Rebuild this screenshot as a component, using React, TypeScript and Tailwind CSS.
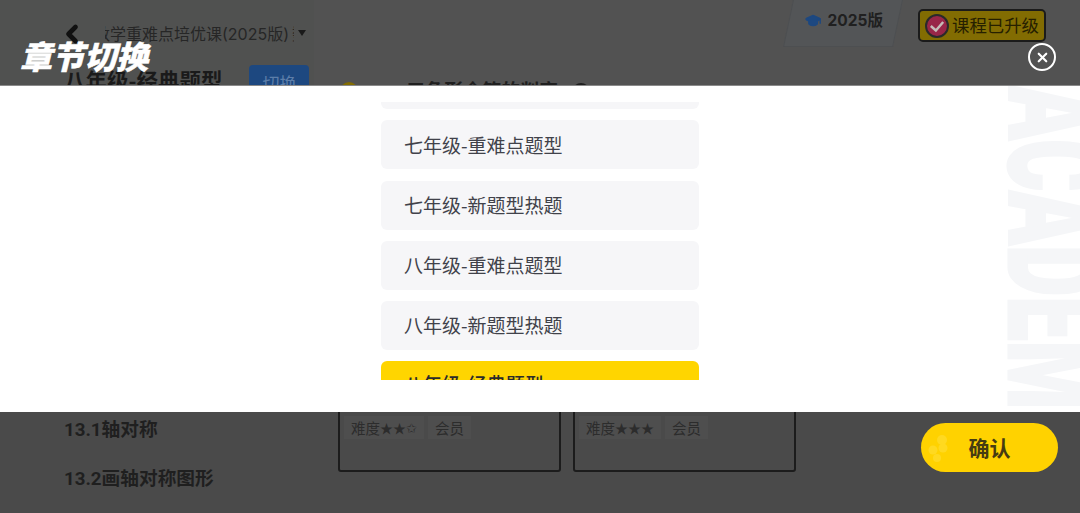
import { ChevronLeft, GraduationCap, X } from 'lucide-react';

const CJK = "font-['Noto_Sans_CJK_SC','Noto_Sans',sans-serif]";
const LATIN = "font-['Inter','Noto_Sans_CJK_SC',sans-serif]";
const HEADING = "font-['Roboto','Noto_Sans_CJK_SC',sans-serif]";

const chapters = ['七年级-重难点题型', '七年级-新题型热题', '八年级-重难点题型', '八年级-新题型热题'];

const Tag = ({ children }: { children: React.ReactNode }) => (
  <span className="flex h-[23px] items-center bg-[#4e4e4e] px-[7px] text-[14.5px] text-[#2c2c2c]">{children}</span>
);

const Card = ({ level }: { level: string }) => (
  <div className="flex h-[88px] w-[223px] items-start gap-[4px] rounded-[3px] border-2 border-[#1c1c1c] pl-[4px] pt-[30px]">
    <Tag>
      难度<span className="text-[13px] leading-none">{level}</span>
    </Tag>
    <Tag>会员</Tag>
  </div>
);

export default function App() {
  return (
    <div className={`relative h-[513px] w-[1080px] overflow-hidden bg-[#4a4a4a] ${CJK}`}>
      {/* page under the dimmed layer */}
      <div className="flex h-full">
        <aside className="flex h-full w-[314px] flex-col">
          <div className="h-[85px] overflow-hidden bg-[#505150] pl-[64px]">
            <div className="flex h-[65px] items-start pt-[20px]">
              <ChevronLeft className="-ml-[6px] h-[28px] w-[28px] text-[#111111]" strokeWidth={4} />
              <div className="ml-[19px] w-[189px] overflow-hidden pt-[1px]">
                <div className={`-ml-[11px] whitespace-nowrap text-[16px] leading-[26px] text-[#262626] ${LATIN}`}>
                  数学重难点培优课(2025版)<span className="ml-[3px]">数学</span>
                </div>
              </div>
              <span className="ml-[4px] mt-[10px] h-0 w-0 border-x-[4px] border-t-[6px] border-x-transparent border-t-[#1a1a1a]" />
            </div>
            <div className="flex items-start">
              <span className="whitespace-nowrap text-[21.5px] font-bold leading-[30px] text-[#1a1a1a]">八年级-经典题型</span>
              <span className="ml-[27px] flex h-[36px] w-[60px] items-center justify-center rounded-[4px] bg-[#1d4880] text-[17px] text-[#5d7ea9]">
                切换
              </span>
            </div>
          </div>
          <div className={`mt-[332px] flex flex-col gap-[23px] pl-[64px] text-[18.7px] font-bold leading-[26px] text-[#1f1f1f] ${HEADING}`}>
            <span>13.1轴对称</span>
            <span>13.2画轴对称图形</span>
          </div>
        </aside>

        <main className="flex h-full flex-1 flex-col">
          <div className="h-[85px] overflow-hidden bg-[#525252]">
            <div className="flex h-[47px] items-start justify-end pr-[34px]">
              <div className="mr-[20px] flex h-[47px] w-[110px] -skew-x-[12deg] items-center justify-center border border-t-0 border-[#4d4f51] bg-[#535557] pb-[5px]">
                <div className={`ml-[1px] flex skew-x-[12deg] items-center gap-[6px] ${LATIN}`}>
                  <GraduationCap className="h-[17px] w-[17px] fill-[#1d4880] text-[#1d4880]" />
                  <span className="text-[15.5px] font-bold text-[#202020]">2025版</span>
                </div>
              </div>
              <div className="mt-[9px] flex h-[33px] w-[128px] items-center gap-[3px] rounded-[5px] border-2 border-[#1b1b1b] bg-[#826c02] pl-[5px]">
                <span className="flex h-[24px] w-[24px] shrink-0 items-center justify-center rounded-full border-2 border-[#2a2a2a] bg-[#982648]">
                  <svg viewBox="0 0 16 16" className="h-[18px] w-[18px]">
                    <path d="M2.5 8 7 12 13.5 4.5" fill="none" stroke="#c4bdb9" strokeWidth="2.2" />
                  </svg>
                </span>
                <span className="whitespace-nowrap text-[17.4px] text-[#262000]">课程已升级</span>
              </div>
            </div>
            <div className="ml-[26px] mt-[32px] flex items-center text-[19px] font-bold leading-[26px] text-[#1f1f1f]">
              <span className="-mt-[2px] h-[18px] w-[18px] rounded-full bg-[#826c02]" />
              <span className={`ml-[10px] whitespace-nowrap ${HEADING}`}>13.3三角形全等的判定</span>
              <span className="ml-[14px] h-[18px] w-[18px] rounded-full border-2 border-[#1f1f1f]" />
            </div>
          </div>
          <div className="flex flex-1 gap-[12px] pl-[24px] pt-[299px]">
            <Card level="★★✩" />
            <Card level="★★★" />
          </div>
        </main>
      </div>

      {/* chapter switch sheet */}
      <div className="absolute inset-x-0 top-0 h-[85px]">
        <h2 className="absolute left-[20px] top-[33px] text-[32px] font-black italic leading-[44px] text-white [-webkit-text-stroke:0.5px_white]">
          章节切换
        </h2>
        <button className="absolute right-[24px] top-[43px] flex h-[28px] w-[28px] items-center justify-center rounded-full border-2 border-white text-white">
          <X className="h-[15px] w-[15px]" strokeWidth={3.5} />
        </button>
      </div>

      <div className="absolute inset-x-0 top-[85px] h-[327px] overflow-hidden border-t border-[#8a8a8a] bg-white">
        <div className="absolute bottom-[6px] right-[-41px] top-0 w-[134px] overflow-hidden">
          <div className="origin-top-left scale-y-[0.6] whitespace-nowrap font-['Roboto',sans-serif] text-[132px] font-black leading-[134px] text-[#f5f6f8] [-webkit-text-stroke:3px_#f5f6f8] [writing-mode:vertical-rl]">
            ACADEMY
          </div>
        </div>
        <div className="mx-auto mt-[16px] h-[278px] w-[318px] overflow-hidden">
          <div className="-mt-[42px] flex flex-col gap-[11.3px]">
            <div className="h-[49px] shrink-0 rounded-[6px] bg-[#f6f6f8]" />
            {chapters.map(name => (
              <div key={name} className="flex h-[49px] shrink-0 items-center rounded-[6px] bg-[#f6f6f8] pl-[23px] text-[19px] text-[#41424a]">
                {name}
              </div>
            ))}
            <div className="flex h-[49px] shrink-0 items-center rounded-[6px] bg-[#ffd500] pb-[3px] pl-[23px] text-[19px] font-medium text-[#2b2b2b]">
              八年级-经典题型
            </div>
          </div>
        </div>
      </div>

      <button className="absolute left-[921px] top-[423px] flex h-[49px] w-[137px] items-center justify-center overflow-hidden rounded-full bg-[#ffd200] text-[21px] font-bold text-[#463c12]">
        <svg viewBox="0 0 30 34" className="absolute left-[6px] top-[9px] h-[34px] w-[30px]" fill="#ffd920">
          <circle cx="15" cy="8" r="5" />
          <circle cx="16" cy="16" r="4.5" />
          <circle cx="6" cy="18" r="4.5" />
          <circle cx="10" cy="26" r="4" />
        </svg>
        <span className="relative">确认</span>
      </button>
    </div>
  );
}
